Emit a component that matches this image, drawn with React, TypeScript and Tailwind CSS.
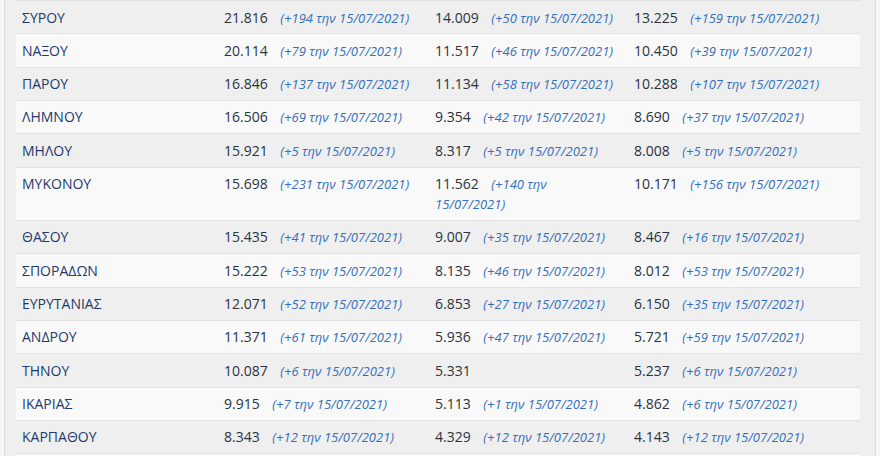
import React from 'react';

type Row = {
  name: string;
  a: [string, string?];
  b: [string, string?];
  c: [string, string?];
};

const d = (n: string) => `(+${n} την 15/07/2021)`;

const rows: Row[] = [
  { name: 'ΣΥΡΟΥ', a: ['21.816', d('194')], b: ['14.009', d('50')], c: ['13.225', d('159')] },
  { name: 'ΝΑΞΟΥ', a: ['20.114', d('79')], b: ['11.517', d('46')], c: ['10.450', d('39')] },
  { name: 'ΠΑΡΟΥ', a: ['16.846', d('137')], b: ['11.134', d('58')], c: ['10.288', d('107')] },
  { name: 'ΛΗΜΝΟΥ', a: ['16.506', d('69')], b: ['9.354', d('42')], c: ['8.690', d('37')] },
  { name: 'ΜΗΛΟΥ', a: ['15.921', d('5')], b: ['8.317', d('5')], c: ['8.008', d('5')] },
  { name: 'ΜΥΚΟΝΟΥ', a: ['15.698', d('231')], b: ['11.562', d('140')], c: ['10.171', d('156')] },
  { name: 'ΘΑΣΟΥ', a: ['15.435', d('41')], b: ['9.007', d('35')], c: ['8.467', d('16')] },
  { name: 'ΣΠΟΡΑΔΩΝ', a: ['15.222', d('53')], b: ['8.135', d('46')], c: ['8.012', d('53')] },
  { name: 'ΕΥΡΥΤΑΝΙΑΣ', a: ['12.071', d('52')], b: ['6.853', d('27')], c: ['6.150', d('35')] },
  { name: 'ΑΝΔΡΟΥ', a: ['11.371', d('61')], b: ['5.936', d('47')], c: ['5.721', d('59')] },
  { name: 'ΤΗΝΟΥ', a: ['10.087', d('6')], b: ['5.331'], c: ['5.237', d('6')] },
  { name: 'ΙΚΑΡΙΑΣ', a: ['9.915', d('7')], b: ['5.113', d('1')], c: ['4.862', d('6')] },
  { name: 'ΚΑΡΠΑΘΟΥ', a: ['8.343', d('12')], b: ['4.329', d('12')], c: ['4.143', d('12')] },
  { name: 'ΚΕΦΑΛΛΗΝΙΑΣ', a: ['8.012', d('9')], b: ['4.101', d('4')], c: ['3.998', d('5')] },
];

const Cell = ({ v }: { v: [string, string?] }) => (
  <td className="pl-[6px] pr-[10px] pt-[6.5px] pb-[5.83px] align-top text-[#2a323e]">
    {v[0]}
    {v[1] && (
      <>
        {' '}
        <em className="ml-[9px] text-[13px] italic text-[#336fbd]">{v[1]}</em>
      </>
    )}
  </td>
);

export default function App() {
  return (
    <div
      className="flex h-[456px] w-[880px] overflow-hidden bg-[#f6f6f6]"
      style={{ fontFamily: '"Open Sans", "Noto Sans", sans-serif' }}
    >
      <div className="ml-[4px] mr-[4px] flex-1 border-x border-[#dcdcdc] bg-[#efefef] pl-[11px] pr-[15px]">
        <table className="w-[844px] table-fixed border-collapse text-[14px] leading-[20px]">
          <colgroup>
            <col className="w-[202px]" />
            <col className="w-[211px]" />
            <col className="w-[199px]" />
            <col className="w-[232px]" />
          </colgroup>
          <tbody>
            {rows.map((r, i) => (
              <tr
                key={r.name}
                className={`border-t border-[#e2e2e2] ${i % 2 === 0 ? 'bg-[#efefef]' : 'bg-[#f9f9f9]'}`}
              >
                <td className="px-[6px] pt-[6.5px] pb-[5.83px] align-top text-[#1d3b6e]">{r.name}</td>
                <Cell v={r.a} />
                <Cell v={r.b} />
                <Cell v={r.c} />
              </tr>
            ))}
          </tbody>
        </table>
      </div>
    </div>
  );
}
